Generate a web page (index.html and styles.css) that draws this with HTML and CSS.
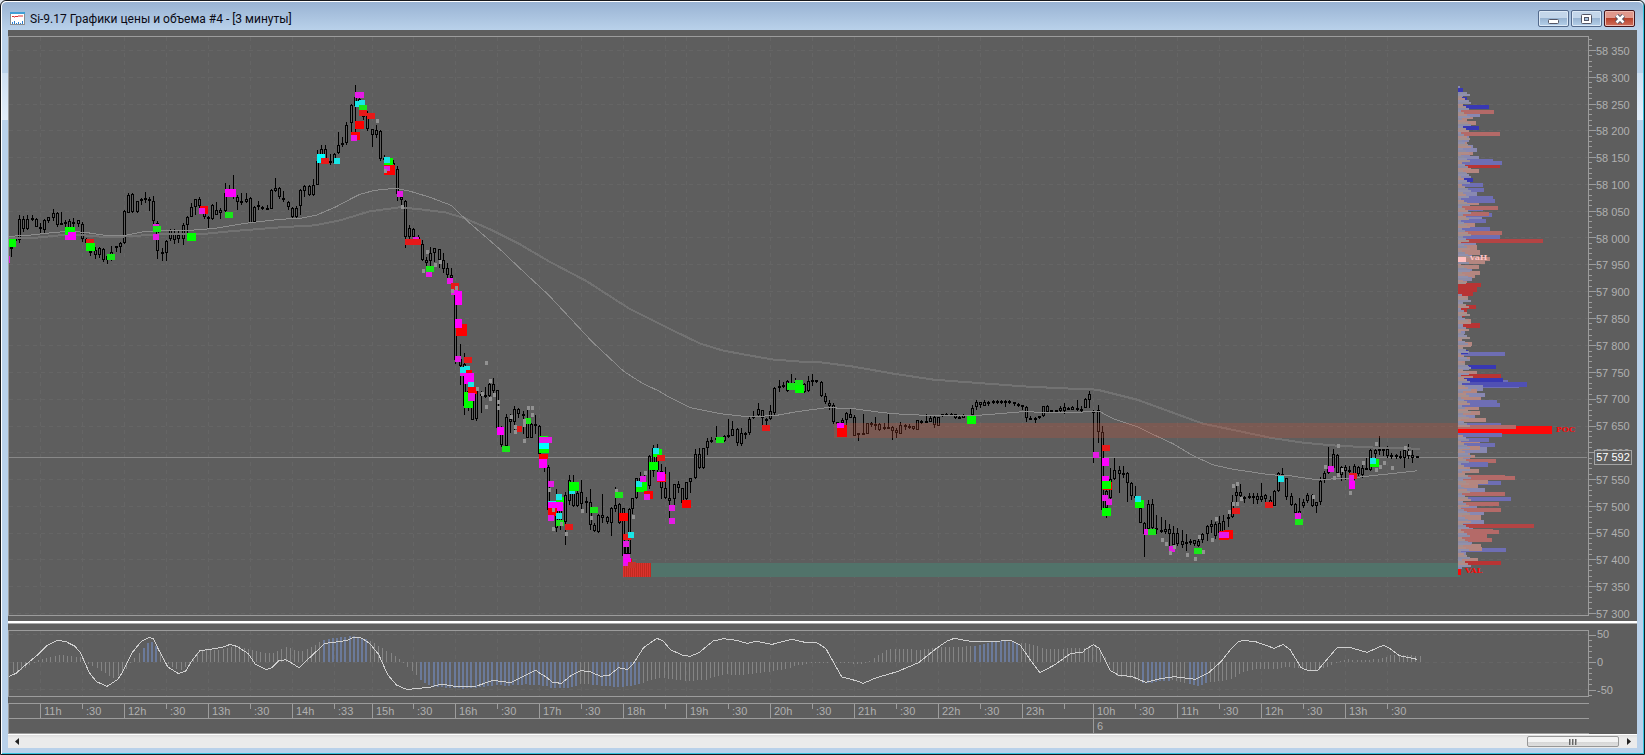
FILE: index.html
```html
<!DOCTYPE html>
<html lang="ru">
<head>
<meta charset="utf-8">
<title>Si-9.17 Графики цены и объема #4</title>
<link rel="stylesheet" href="styles.css">
</head>
<body>
<div class="window">
  <header class="titlebar">
    <svg class="app-icon" viewBox="0 0 15 13" aria-hidden="true">
      <rect x="0" y="0" width="15" height="13" fill="#8c8c8c"/>
      <rect x="1" y="1" width="13" height="11" fill="#fff"/>
      <rect x="0" y="0" width="15" height="2" fill="#3f9fd6"/>
      <path d="M2 5l1-1 1 1 1 0 1-1 1 1 1-1h5" fill="none" stroke="#d33" stroke-width="1"/>
      <path d="M2.500 12v-2M4.500 12v-3M6.500 12v-1M8.500 12v-2M10.500 12v-1M12.500 12v-3" stroke="#2b7fd0" stroke-width="1"/>
    </svg>
    <h1 class="caption">Si-9.17 Графики цены и объема #4 - [3 минуты]</h1>
    <div class="window-buttons">
      <button class="win-btn" type="button" aria-label="Свернуть"><svg viewBox="0 0 12 10"><rect x=".5" y="5.500" width="10" height="4" rx="1" fill="#fff" stroke="#535666"/></svg></button>
      <button class="win-btn" type="button" aria-label="Развернуть"><svg viewBox="0 0 12 10"><rect x=".5" y=".5" width="10" height="9" rx="1" fill="#fff" stroke="#535666"/><rect x="3.500" y="3.500" width="4" height="3" fill="#a9c4e0" stroke="#535666"/></svg></button>
      <button class="win-btn close" type="button" aria-label="Закрыть"><svg viewBox="0 0 12 10"><path d="M2.500 1.500l7 7M9.500 1.500l-7 7" stroke="#535666" stroke-width="4.500"/><path d="M2.500 1.500l7 7M9.500 1.500l-7 7" stroke="#fff" stroke-width="2.500"/></svg></button>
    </div>
  </header>
  <main class="content">
    <section class="pane price-pane">
      <svg class="plot" id="price" viewBox="9 37 1579 577" preserveAspectRatio="none"></svg>
      <svg class="ticks" id="price-ticks" viewBox="0 37 7 577" preserveAspectRatio="none"></svg>
      <div class="scale" id="price-scale"></div>
      <output class="last-price">57 592</output>
    </section>
    <div class="splitter"></div>
    <section class="pane osc-pane">
      <svg class="plot" id="osc" viewBox="9 630 1579 65" preserveAspectRatio="none"></svg>
      <svg class="ticks" id="osc-ticks" viewBox="0 630 7 65" preserveAspectRatio="none"></svg>
      <div class="scale"><span>50</span><span>0</span><span>-50</span></div>
    </section>
    <div class="time-axis">
      <div class="time-row" id="hours"></div>
      <div class="time-row" id="days"></div>
    </div>
    <div class="scrollbar">
      <button class="scroll-arrow" type="button" aria-label="Влево"><svg viewBox="0 0 4 7"><path d="M4 0v7L0 3.500z" fill="#222"/></svg></button>
      <div class="track"><div class="thumb"><i></i><i></i><i></i></div></div>
      <button class="scroll-arrow" type="button" aria-label="Вправо"><svg viewBox="0 0 4 7"><path d="M0 0v7l4-3.500z" fill="#222"/></svg></button>
    </div>
  </main>
</div>
<script src="chart.js"></script>
</body>
</html>
```
FILE: styles.css
```css
* { box-sizing: border-box; }

body {
  margin: 0;
  background: #dfe6ee;
  font-family: "Liberation Sans", Arial, sans-serif;
  font-size: 11px;
}

.window {
  height: 100vh;
  display: flex;
  flex-direction: column;
  padding: 0 7px 6px 6px;
  border: 1px solid #16181c;
  border-radius: 6px 6px 0 0;
  background: linear-gradient(#b9d1ea 72px, #cfe0f2 72px, #e2edf9 119px, #b9d1ea 119px);
  box-shadow: inset 1px 1px 0 #fff, inset -1px -1px 0 #35c3de;
}

.titlebar {
  display: flex;
  align-items: center;
  height: 29px;
  flex: none;
  margin: 0 -6px 0 -5px;
  padding: 5px 8px 0 8px;
  border-top: 1px solid #fff;
  border-radius: 5px 5px 0 0;
  background: linear-gradient(#99b3d3, #b9d1ea);
}

.app-icon { width: 15px; height: 13px; margin-right: 5px; }

.caption {
  flex: 1;
  margin: 0;
  font: 400 12px/16px Roboto, "Open Sans", sans-serif;
  color: #0a0a14;
}

.window-buttons { display: flex; gap: 2px; }

.win-btn {
  width: 31px;
  height: 17px;
  padding: 0;
  display: flex;
  align-items: center;
  justify-content: center;
  border: 1px solid #536a8c;
  border-radius: 2px;
  background: linear-gradient(#c3d6ea 50%, #98b4d2 50%, #b5d0ea);
  box-shadow: inset 0 0 0 1px #dce9f6;
}

.win-btn svg { width: 12px; height: 10px; }

.win-btn.close {
  border-color: #43141c;
  background: linear-gradient(#e0988c 50%, #b8412b 50%, #d0705c);
  box-shadow: inset 0 0 0 1px #eebcb2;
}

.content {
  flex: 1;
  min-height: 0;
  margin: 0 0 0 1px;
  display: flex;
  flex-direction: column;
  background: #5e5e5e;
}

.pane {
  display: grid;
  grid-template-columns: minmax(0, 1fr) 7px 41px;
  position: relative;
  min-height: 0;
}

.price-pane { flex: 1; overflow: hidden; grid-template-rows: minmax(0, 1fr); }
.osc-pane { flex: none; height: 79px; grid-template-rows: minmax(0, 1fr); }

.plot {
  width: 100%;
  height: calc(100% - 11px);
  margin-top: 6px;
  border: 1px solid #9c9c9c;
}

.osc-pane .plot { height: calc(100% - 12px); }

.ticks { width: 7px; height: calc(100% - 13px); margin-top: 7px; }
.osc-pane .ticks { height: calc(100% - 14px); }

.scale {
  display: flex;
  flex-direction: column;
  justify-content: space-between;
  min-height: 0;
  padding: 15px 0 1px;
  line-height: 12px;
  color: #b0b0b0;
  white-space: nowrap;
}

.osc-pane .scale { padding: 4px 0 7px 1px; }

.last-price {
  position: absolute;
  right: 5px;
  top: 71%;
  width: 38px;
  height: 15px;
  border: 1px solid #a4a4a4;
  background: #5e5e5e;
  color: #fff;
  line-height: 13px;
  text-align: center;
  white-space: nowrap;
}

.splitter { flex: none; height: 3px; background: #fff; border-bottom: 1px solid #a8a8a8; }

.time-axis {
  flex: none;
  margin-right: 48px;
  border-top: 1px solid #9c9c9c;
  border-left: 1px solid #9c9c9c;
  color: #b0b0b0;
}

.time-row { display: flex; height: 15px; border-bottom: 1px solid #9c9c9c; line-height: 14px; }

.time-cell {
  min-width: 0;
  flex-basis: 0;
  text-indent: 4px;
  white-space: nowrap;
  background: linear-gradient(#9c9c9c, #9c9c9c) 0 0 / 1px 100% no-repeat;
}
.time-cell.lead { background: none; }
.time-cell.half { background-size: 1px 5px; }

.scrollbar {
  flex: none;
  display: flex;
  height: 14px;
  border-top: 1px solid #fff;
  background: linear-gradient(#dcdcdc, #ebebeb 3px);
}

.scroll-arrow {
  width: 17px;
  padding: 0;
  border: 0;
  background: transparent;
  display: flex;
  align-items: center;
  justify-content: center;
}

.scroll-arrow svg { width: 4px; height: 7px; }

.track { flex: 1; display: flex; justify-content: flex-end; }

.thumb {
  width: 92px;
  margin: 1px 1px 1px 0;
  display: flex;
  gap: 1px;
  align-items: center;
  justify-content: center;
  border: 1px solid #979797;
  border-radius: 2px;
  background: linear-gradient(#f3f3f3 50%, #d6d6d6 50%, #dedede);
}

.thumb i { width: 2px; height: 6px; background: #666; border-right: 1px solid #aaa; }

#price, #osc, .ticks { shape-rendering: crispEdges; display: block; }

.mark-text { font: 700 8px "DejaVu Serif", "Liberation Serif", serif; }
```
FILE: chart.js
```js
const NS = 'http://www.w3.org/2000/svg';

function add(parent, tag, attrs, text) {
  const el = document.createElementNS(NS, tag);
  for (const k in attrs) el.setAttribute(k, attrs[k]);
  if (text) el.textContent = text;
  parent.appendChild(el);
}
const rect = (p, x, y, w, h, fill, extra) => add(p, 'rect', { x, y, width: w, height: h, fill, ...extra });
const line = (p, x1, y1, x2, y2, stroke, extra) => add(p, 'line', { x1, y1, x2, y2, stroke, ...extra });

/* time ticks: [x, label] */
const TIMES = [[40,'11h'],[82,':30'],[124,'12h'],[166,':30'],[208,'13h'],[250,':30'],[292,'14h'],[334,':33'],[372,'15h'],
  [413,':30'],[455,'16h'],[497,':30'],[539,'17h'],[581,':30'],[623,'18h'],[665,''],[686,'19h'],[728,':30'],[770,'20h'],
  [812,':30'],[854,'21h'],[896,':30'],[938,'22h'],[980,':30'],[1022,'23h'],[1064,''],[1093,'10h'],[1135,':30'],[1177,'11h'],
  [1219,':30'],[1261,'12h'],[1303,':30'],[1345,'13h'],[1387,':30']];

/* candles: x, high, low, body top, body bottom, in thirds of a unit from the origin */
const CANDLES = [
  { o: [0, 0], d: `34 735 770 742 745,46 710 740 716 724,58 646 728 658 720,70 648 696 658 688,82 646 690 658 688,97 646 662 654 660,109 654 682 656 680,121 668 698 680 688,133 656 698 660 690,145 650 668 652 664,160 628 662 640 654,172 636 680 640 676,184 636 674 668 672,196 660 680 666 672,208 656 690 662 690,221 654 680 666 670,235 660 680 660 672,247 666 726 672 718,259 714 730 718 728,271 728 768 752 760,286 742 776 750 764,298 742 774 744 766,310 744 786 746 780,322 766 792 768 780,334 738 782 755 780,349 738 756 738 742,361 726 758 730 742,373 630 732 632 730,385 580 638 586 638,397 580 638 582 636,412 602 638 604 636,424 594 614 598 604,436 576 610 594 600,448 590 632 596 604,460 588 674 604 664,472 664 776 668 754,487 744 782 756 760,499 720 782 722 760,511 688 724 690 716,523 686 732 700 720,535 694 728 706 716,550 670 734 674 718,562 648 720 650 676,574 608 652 622 650,586 596 646 598 622,598 592 640 598 618,613 620 656 622 652,625 648 684 650 658,637 612 660 614 656,649 606 646 630 646,661 624 656 630 640,676 550 640 580 634,688 556 585 568 580,700 526 596 580 590,712 586 630 590 606,724 580 616 604 608,739 580 608 596 606,751 592 668 594 668,763 618 668 622 666,775 604 630 616 620,787 618 630 620 626,802 614 630 624 628,814 566 628 570 626,826 534 576 564 572,838 562 598 564 592,850 574 606 594 600,865 602 630 606 622,877 622 656 624 650,889 618 654 624 650,901 568 646 570 618,913 556 592 558 574,928 556 588 558 586,940 538 588 556 586,952 450 556 484 554,964 436 470 446 468,976 436 482 446 478,991 462 494 484 488,1003 460 492 462 488,1015 396 462 434 460,1027 410 440 430 434,1039 366 434 374 430,1054 312 412 314 370,1066 255 396 290 318,1078 292 330 298 310,1090 312 360 320 350,1102 334 392 340 388,1117 386 440 388 404,1129 376 414 390 406,1141 390 482 392 476,1153 466 490 474 480,1165 480 500 484 490,1180 480 510 490 500,1192 498 602 508 582` },
  { o: [300, 60], d: `304 405 440 412 420,316 420 564 422 530,328 494 540 505 530,340 504 546 506 530,355 525 545 532 540,367 540 604 552 600,379 590 622 600 608,391 562 640 580 604,403 564 605 565 578,418 567 625 568 600,430 580 638 600 626,442 608 655 625 645,454 624 680 645 655,466 670 908 676 896,481 850 972 895 915,493 876 1062 910 1035,505 985 1050 990 1040,517 1000 1077 1020 1076,529 985 1080 990 1074,544 990 1056 1000 1004,556 978 1012 1003 1008,568 960 1012 970 1005,580 952 1002 970 990,592 987 1102 988 1100,604 1096 1158 1100 1152,619 1060 1158 1068 1155,631 1060 1116 1075 1083,643 1035 1110 1045 1082,655 1040 1072 1045 1060,670 1050 1120 1058 1066,682 1045 1130 1075 1130,694 1085 1130 1088 1130,706 1062 1120 1088 1092,718 1092 1180 1095 1178` },
  { o: [420, 340], d: `373 370 392 374 380,385 372 510 378 508,397 500 530 505 515,409 445 572 500 560,421 470 568 500 540,436 452 612 462 542,448 402 492 418 480,460 402 498 435 496,472 440 498 455 494,484 418 516 454 488,499 468 515 480 486,511 445 568 484 552,523 545 574 552 570,535 520 576 523 574,547 460 545 523 530,562 525 548 529 543,574 497 585 500 545,586 438 512 492 503,598 486 548 490 545,610 500 650 500 645,619 600 645 602 640,628 502 645 505 640,637 470 520 472 505,649 410 475 412 470,661 392 450 410 440,673 400 455 420 450,688 342 445 345 436,700 312 408 320 390,712 308 392 320 388,724 370 475 390 442,736 378 473 442 472,748 394 536 472 480,763 428 492 430 475,775 420 456 430 442,787 440 488 442 485,799 422 490 424 475,811 410 455 412 424,826 324 413 340 412,838 320 384 340 380,850 320 384 322 382` },
  { o: [640, 350], d: `202 260 312 271 292,214 258 275 268 273,229 225 265 262 266,241 258 275 262 270,253 252 272 254 270,265 205 262 252 256,277 210 256 235 254,292 230 284 234 275,304 232 284 245 278,316 243 264 245 248,328 195 252 205 245,340 180 204 196 202,355 155 198 175 192,367 176 225 178 202,379 200 222 203 207,391 163 208 181 205,403 108 196 112 185,418 88 122 105 112,430 92 110 103 109,442 88 124 90 120,454 69 100 95 100,466 82 110 92 100,493 95 125 98 122,505 74 124 90 120,517 69 104 88 91,529 88 96 88 92,544 90 138 92 136,556 126 158 136 154,568 148 178 157 164,580 156 218 162 214,592 213 225 213 216,607 200 220 206 216,619 184 222 187 208,631 174 200 190 200,643 192 256 198 254,655 246 270 247 251,670 188 250 247 250,682 216 250 217 248,694 212 228 217 223,706 198 236 219 226,718 216 240 220 236,733 216 238 228 232,745 188 235 228 231,757 224 267 229 241,769 230 260 238 245,781 213 250 223 248,796 218 236 223 227,808 220 234 224 232,820 224 238 226 235,832 206 238 208 236,844 206 218 211 214,859 188 216 210 215,871 196 214 200 213,883 196 230 198 223,895 198 226 199 224,907 190 198 190 193,919 186 196 190 193,934 185 194 188 192,946 190 204 190 200,958 192 204 198 203,970 190 202 192 201,985 192 200 194 198,997 162 194 171 192,1009 148 176 153 168,1021 152 172 154 163,1033 148 166 154 164,1045 150 164 154 160,1060 148 160 151 156,1072 148 158 151 155,1084 148 158 151 155,1096 148 168 151 156,1108 146 160 149 154,1123 152 164 153 158,1135 156 168 159 163,1147 162 178 163 167,1159 164 212 168 200,1171 196 208 200 205,1186 197 216 200 203,1198 195 204 196 200,1210 164 198 166 196,1222 162 184 164 182,1234 176 184 178 181,1249 176 184 178 181,1261 166 184 170 181,1273 156 188 167 180,1285 168 178 170 177,1297 166 178 169 176,1312 147 180 170 176,1324 166 184 173 178,1336 142 172 145 170,1348 120 172 130 146,1360 176 336 179 182,1375 162 276 178 242` },
  { o: [1070, 370], d: `97 165 420 184 418,109 355 440 360 410,121 292 390 325 380,133 262 328 297 325,148 285 366 297 308,160 285 322 305 310,172 302 392 306 336,184 332 386 336 374,196 345 390 374 380,211 400 455 410 455,223 452 558 455 488,235 388 480 398 475,247 384 480 400 472,259 432 490 470 474,274 438 486 477 483,286 446 488 475 482,298 460 528 475 488,310 465 535 487 522,322 472 525 487 520,337 476 530 510 522,349 488 540 512 518,361 503 522 511 517,373 507 525 508 520,385 505 528 510 524,397 486 516 488 506,412 462 510 466 488,424 448 486 460 467,436 454 505 460 495,448 436 485 455 485,460 432 490 450 490,475 430 468 438 441,487 372 442 392 438,499 345 400 364 376,511 339 384 364 376,523 374 396 378 381,538 366 385 376 380,550 366 398 375 380,562 366 400 376 388,574 336 392 374 388,586 368 393 373 385,600 376 404 388 400,613 356 404 361 404,625 304 362 306 360,637 290 320 308 315,649 320 386 322 378,664 366 404 374 402,676 396 430 398 425,688 380 440 420 430,700 385 410 392 405,712 366 396 371 391,727 368 408 371 404,739 392 426 394 404,751 318 402 330 392,763 300 335 305 325,775 228 308 295 305,790 235 300 250 290,802 248 312 253 305,814 284 330 287 312,826 282 326 287 300,838 284 310 296 302,853 278 328 284 310,865 286 315 288 308,877 282 320 292 312,889 262 298 292 296,901 235 300 238 298,916 233 265 236 250,928 196 252 234 237,940 234 254 235 238,952 226 262 235 256,964 246 264 251 255,979 250 265 252 256,991 240 264 254 262,1003 226 290 238 262,1015 220 264 240 255,1027 238 276 252 260,1042 255 262 256 260` }
];

/* volume markers: colour, x, y, width, height; grey ones share one size */
const INK = { g: '#00ff00', G: '#19e619', m: '#ff00ff', M: '#e619e6', c: '#00ffff', C: '#19e6e6', r: '#ff0000', R: '#e61919', y: '#929292' };
const MARKERS = [
  { o: [0, 0], d: `g 27 717 21 24,M 27 768 3 20,g 195 681 30 27,M 196 706 16 14,m 205 697 23 23,R 257 717 24 14,g 258 729 27 24,G 321 762 24 18,M 460 672 18 8,G 459 678 24 18,M 459 702 18 18,g 561 699 27 25,r 599 617 25 24,M 597 624 18 18,m 675 567 33 24,G 675 636 24 18,c 951 462 25 27,R 963 474 24 18,C 1002 474 18 18,M 1066 276 26 18,C 1066 303 16 18,C 1077 300 18 18,G 1077 315 24 16,R 1077 330 24 18,R 1101 340 24 19,r 1066 363 26 24,r 1054 396 26 24,M 1054 405 18 18,y 1128 357,g 1153 474 26 26,C 1152 471 18 18,r 1152 496 33 29,M 1152 498 18 14,y 1152 507,M 1191 573 18 18,y 1203 615,M 1239 712 18 8,R 1215 717 24 18,R 1239 717 24 18` },
  { o: [300, 60], d: `y 378 570,M 378 636 18 15,G 378 618 24 18,y 366 627,y 402 609,y 417 600,M 441 654 18 18,R 453 669 24 20,M 454 690 20 15,m 465 693 21 42,y 453 687,y 465 678,r 467 792 34 33,m 465 777 20 24,M 465 885 18 18,R 492 888 24 18,M 480 930 18 15,C 480 918 18 18,C 492 915 18 18,r 498 928 18 15,m 492 936 30 33,C 504 963 18 15,g 492 993 27 48,r 504 978 26 22,y 528 978,M 504 996 20 23,y 555 900,y 567 954,y 543 993,y 579 996,y 567 1008,y 555 1032,y 591 1018,y 591 1035,m 591 1098 20 24,G 606 1155 24 18,y 630 1062,R 651 1095 14 18,y 642 1092,y 642 1107,G 675 1071 18 18,y 669 1074,y 669 1086,y 681 1035,y 693 1035,y 693 1056,y 669 1134` },
  { o: [420, 340], d: `g 357 285 28 8,M 357 288 38 17,c 357 306 30 18,g 357 324 30 12,r 357 339 27 16,m 357 354 25 27,M 384 420 18 18,y 384 441,C 384 480 24 8,g 409 468 23 18,m 384 483 45 20,C 408 459 18 18,m 406 485 24 24,r 384 500 27 24,y 396 501,M 384 522 18 18,C 408 516 18 18,G 408 537 24 18,y 420 543,y 396 558,y 435 573,R 435 549 24 18,C 447 440 18 19,g 447 423 30 27,y 483 504,G 510 498 24 18,y 510 525,y 585 444,G 585 453 24 18,r 597 516 26 24,R 609 579 24 18,C 624 573 18 18,M 609 600 18 18,M 609 640 21 37,r 628 655 10 20,m 612 650 20 14,y 636 522,g 648 423 33 30,C 648 420 18 18,M 660 405 18 18,y 672 390,r 673 450 26 24,M 672 459 18 18,g 700 324 26 24,C 699 321 18 18,R 711 342 24 18,g 687 363 27 24,r 711 400 27 25,m 712 393 24 27,M 747 492 18 18,M 747 531 18 18,r 786 477 27 24` },
  { o: [640, 350], d: `G 228 258 24 18,R 366 222 24 18,G 441 96 24 21,G 465 87 24 18,g 465 102 27 24,r 591 222 30 36,m 591 216 21 16,g 981 195 27 24` },
  { o: [1070, 370], d: `M 69 243 18 18,R 96 222 24 18,m 96 262 22 24,m 96 315 21 20,r 100 334 26 24,g 96 330 27 24,M 96 372 18 18,M 108 384 18 18,g 96 411 27 24,g 195 387 27 24,C 195 375 18 18,M 221 474 18 18,G 234 474 24 18,y 273 501,y 285 513,M 297 525 18 18,y 297 540,y 309 522,y 348 546,G 372 531 24 18,y 372 558,y 396 537,y 384 492,y 423 500,y 435 438,r 447 480 30 27,r 462 477 27 26,M 448 483 29 18,R 486 411 24 18,y 474 417,y 486 339,y 498 333,y 510 378,y 498 393,y 486 393,R 585 393 24 18,C 624 315 18 18,M 675 426 18 18,G 675 444 24 18,y 726 372,M 774 285 18 18,y 762 282,y 801 219,y 801 306,y 789 315,y 813 291,y 837 360,R 837 306 24 18,M 838 312 16 20,m 838 330 19 23,y 876 270,g 900 264 27 24,C 900 262 18 18,y 915 213,y 915 291,y 927 282,y 939 270,y 963 285,y 1002 225,y 1014 240` }
];

const FAST = '9,236 28,235 55,232 70,231 85,232 105,235 125,235 145,231 190,230 215,228 245,223 280,219 300,218 316,215 335,207 350,199 360,194 375,190 395,188 410,191 430,197 451,205 470,223 500,249 520,268 549,295 592,341 624,371 643,383 658,390 670,397 690,407 720,413 747,416 775,415 797,411 827,407 853,408 883,412 907,414 940,415 973,415 1000,413 1023,411 1053,412 1100,411 1113,418 1137,426 1160,437 1173,443 1193,455 1213,464 1230,468 1270,474 1290,475 1317,479 1353,477 1390,473 1417,470';
const SLOW = '9,238 30,238 70,234 110,237 160,234 200,234 230,231 280,227 315,225 340,220 370,211 400,207 420,209 445,212 465,218 490,229 520,244 549,261 587,281 629,308 671,329 700,343 723,350 750,355 773,359 800,361 823,362 853,366 893,373 933,379 973,382 1027,386 1070,388 1097,389 1137,399 1170,411 1203,423 1237,430 1270,437 1303,442 1337,445 1377,447 1420,448';

/* volume profile rows: top, bottom, right edge, colour (thirds of a unit) */
const TONE = { B: '#3838b4', b: '#6e6eb4', v: '#5050b4', p: '#8888b2', r: '#b46a68', s: '#b48680', R: '#b83434', D: '#b44444', F: '#ff0808' };
const PROFILE = [
  { y: 60, d: `78 90 119 p,84 99 129 B,99 110 129 p,111 123 141 B,120 132 147 p,135 147 207 B,161 171 180 p,150 162 222 r,171 177 160 s,177 183 140 s,183 195 168 s,195 204 138 s,198 210 177 B,210 216 140 p,216 228 240 r,228 245 147 p,245 256 140 s,255 264 158 p,264 275 171 p,275 285 158 s,285 290 150 p,288 299 177 p,297 304 219 b,303 315 246 b,315 324 240 R,324 328 150 p,327 339 177 s,339 350 140 p,347 356 153 p,354 366 159 B,366 370 140 s,369 381 189 b,384 396 192 b,396 408 170 p,407 420 219 b,417 429 225 b,429 436 177 s,438 450 234 r,450 453 190 b,459 471 216 b,456 468 208 r,471 478 185 p,477 489 198 b,489 501 165 s,501 513 210 b,525 540 240 b,513 525 246 r,538 550 370 D,550 556 168 p,556 570 170 s,570 585 180 s,585 591 155 p,591 603 210 s,603 612 195 s,615 627 177 s,627 634 155 p,633 645 180 s,645 654 165 s,652 664 157 p,664 670 140 s,669 681 184 R,681 696 172 R,696 708 160 R,708 720 144 s,720 735 130 s,735 748 168 R,748 760 140 R,760 772 135 R,772 783 126 B,778 789 153 s,789 801 180 R` },
  { y: 320, d: `0 10 153 s,21 30 130 s,28 40 135 p,35 56 125 R,63 75 156 s,75 86 130 s,94 105 255 b,87 99 144 B,108 120 150 s,120 132 135 s,132 144 228 B,135 148 146 p,150 160 171 s,160 171 243 R,165 177 160 s,177 186 263 b,172 183 250 B,196 201 297 b,183 197 321 v,193 209 189 p,204 216 172 s,216 228 195 p,228 240 182 s,246 258 240 b,238 251 230 b,258 268 177 s,270 282 180 s,282 291 165 p,291 303 198 s,306 318 243 b,315 339 397 F,312 323 288 r,336 348 246 b,351 363 207 b,363 374 180 s,366 378 225 b,378 396 200 p,374 388 180 s,396 404 150 s,402 412 165 s,412 414 150 p,414 426 228 r,424 438 204 b,438 444 150 s,444 456 177 s,462 466 256 r,465 477 286 r,480 492 243 b,477 489 204 s,490 504 175 s,500 512 195 p,513 525 255 r,528 540 273 b,543 555 238 r,555 562 170 p,570 582 192 p,561 573 243 r,582 597 183 s,597 610 192 p,609 621 342 D,621 627 160 p,624 630 218 r,627 639 238 r,639 651 202 r,651 663 216 r,663 669 155 p,669 681 183 s,681 693 258 b,678 690 186 s,693 711 138 p,711 720 174 s,720 732 243 R,732 738 145 s,738 745 127 p,745 762 124 F` }
];

/* oscillator: x origin, then x/y pairs in the oscillator's own steps */
const OSC_X = 2.8;
const ENVELOPE = [
  [0, '36 185 60 178 82 163 100 150 130 142 170 132 225 138 240 150 245 156 285 180 320 202 345 185 365 157 390 125 415 92 430 93 445 125 465 150 480 168 505 178 525 165 545 140 560 118 620 117 660 102 700 115 740 127 765 125 800 108 845 122 880 104 910 84 990 75 1025 83 1060 104 1100 130 1125 150 1150 175 1185 215 1210 228 1300 233 1400 222 1420 225 1470 220 1510 222 1540 228'],
  [540, '30 230 75 231 120 218 170 224 215 228 260 224 290 214 340 200 410 210 460 207 520 190 570 192 630 184 680 176 720 164 755 158 770 154 820 151 850 155 870 158 900 158 920 153 940 137 975 115 1040 115 1060 117 1130 108 1210 106 1240 98 1290 90 1340 95 1370 98 1415 114 1460 114 1490 110 1525 110'],
  [1085, '10 110 30 106 50 120 60 150 75 175 90 195 130 200 165 218 200 212 250 208 290 218 320 225 340 215 380 210 410 205 440 183 470 175 530 175 570 168 595 172 630 180 660 175 690 162 705 153 740 145 790 148 830 141 860 132 890 131 940 135']
];
const CURVE = [
  [0, '25 196 45 187 70 163 105 132 130 105 160 88 185 92 210 106 225 125 250 185 270 212 300 226 330 205 345 180 370 125 395 92 418 79 430 84 445 118 470 168 500 188 520 180 540 145 560 119 600 113 625 108 645 100 665 107 695 128 715 160 745 176 760 171 780 150 800 146 815 155 838 171 860 147 910 97 950 92 975 87 990 79 1010 80 1035 97 1060 130 1085 190 1110 222 1140 236 1165 232 1200 230 1235 219 1280 227 1335 225 1380 208 1430 215 1470 194 1500 178'],
  [540, '0 187 20 200 35 214 60 217 85 195 115 179 140 182 170 196 195 192 220 170 245 176 260 160 290 110 310 95 327 82 345 90 365 116 400 133 420 136 445 125 485 90 515 83 550 88 580 97 605 91 650 100 705 85 750 96 775 95 800 112 820 150 845 198 885 209 905 217 940 201 1000 182 1060 155 1110 112 1140 90 1160 82 1200 90 1260 91 1320 89 1345 103 1375 150 1400 185 1440 162 1485 128 1520 123'],
  [1085, '0 116 23 101 40 112 70 178 95 193 130 196 170 214 210 203 250 197 310 205 345 186 380 153 410 112 430 92 445 88 480 93 530 112 555 100 575 117 605 170 625 179 650 180 670 155 705 111 740 109 790 124 835 103 850 110 880 134 930 145']
];
const STRONG = [[142,156],[323,369],[418,579],[590,639],[973,1020],[1140,1168],[1186,1209]];

const GRID = '#656565';
const EDGE = '#9c9c9c';
const yOf = price => 50.5 + (58350 - price) * 562 / 1050;

function drawPrice() {
  const p = document.getElementById('price');
  for (let v = 58350; v >= 57300; v -= 50) {
    const y = Math.floor(yOf(v)) + .5;
    line(p, 9, y, 1588, y, GRID, { 'stroke-dasharray': '4 4' });
  }
  TIMES.forEach(([x]) => line(p, x + .5, 37, x + .5, 614, GRID, { 'stroke-dasharray': '4 4' }));
  rect(p, 9, 456, 1578, 1, '#888');

  CANDLES.forEach(({ o, d }) => d.split(',').forEach(row => {
    const [x, hi, lo, top, bot] = row.split(' ').map(Number);
    const cx = o[0] + Math.floor(x / 3);
    const y = v => o[1] + Math.round(v / 3);
    rect(p, cx, y(hi), 1, Math.max(1, y(lo) - y(hi)), '#000');
    const h = Math.max(2, y(bot) - y(top));
    rect(p, cx - 1, y(top), 3, h, '#000');
    if (h > 2) rect(p, cx, y(top) + 1, 1, h - 2, '#5e5e5e');
  }));

  add(p, 'polyline', { points: SLOW, fill: 'none', stroke: '#727272', 'stroke-width': 2 });
  add(p, 'polyline', { points: FAST, fill: 'none', stroke: '#8c8c8c', 'stroke-width': 1 });
  rect(p, 834, 422, 624, 15, 'rgba(200,83,57,.27)');
  rect(p, 651, 562, 809, 14, '#51736a');

  rect(p, 623, 562, 28, 14, '#dc322d');
  for (let x = 624; x < 651; x += 2) rect(p, x, 562, 1, 14, '#c02a20');
  MARKERS.forEach(({ o, d }) => d.split(',').forEach(row => {
    const [c, x, y, w = 9, h = 12] = row.split(' ');
    const x0 = o[0] + Math.round(x / 3), y0 = o[1] + Math.round(y / 3);
    rect(p, x0, y0, Math.round(w / 3), Math.round(h / 3), INK[c]);
  }));
  rect(p, 628, 561, 8, 6, '#c8322c');

  PROFILE.forEach(({ y, d }) => d.split(',').forEach(row => {
    const [a, b, e, c] = row.split(' ');
    const top = y + Math.round(a / 3);
    rect(p, 1458, top, Math.round((e - 114) / 3), y + Math.round(b / 3) - top, TONE[c]);
  }));
  /* short rows at the base of the profile */
  for (let y = 92; y < 566; y += 2) {
    if (y > 282 && y < 294 || y > 424 && y < 433) continue;
    const w = 3 + (y * 7 % 11);
    rect(p, 1458, y, w, 2, ['#a3908f', '#9090ac', '#b08c88', '#8d8da6'][(y * 5 >> 2) % 4]);
  }
  rect(p, 1458, 257, 8, 5, '#ffbfbf');
  const label = (x, y, fill, t) => add(p, 'text', { x, y, fill, class: 'mark-text' }, t);
  label(1470, 260, '#ffc4c4', 'vaH');
  label(1556, 431, '#ff0808', 'POC');
  label(1465, 572, '#ff0808', 'VAL');
}

function drawTicks() {
  const p = document.getElementById('price-ticks');
  for (let v = 58370; v >= 57300; v -= 10) rect(p, 0, Math.floor(yOf(v)), v % 50 ? 3 : 7, 1, EDGE);
  const s = document.getElementById('osc-ticks');
  for (let v = 50; v >= -60; v -= 10) rect(s, 0, Math.round(661 - v * .55), v % 50 ? 3 : 7, 1, EDGE);
  const scale = document.getElementById('price-scale');
  for (let v = 58350; v >= 57300; v -= 50) {
    const el = document.createElement('span');
    el.textContent = String(v).slice(0, 2) + ' ' + String(v).slice(2);
    scale.appendChild(el);
  }
}

function points(groups) {
  return groups.flatMap(([x0, s]) => {
    const n = s.split(' ').map(Number), out = [];
    for (let i = 0; i < n.length; i += 2) out.push([x0 + n[i] / OSC_X, 610 + n[i + 1] / 3]);
    return out;
  });
}

function drawOsc() {
  const p = document.getElementById('osc');
  [633, 661, 688].forEach(y => line(p, 9, y + .5, 1588, y + .5, GRID, { 'stroke-dasharray': '4 4' }));
  TIMES.forEach(([x]) => line(p, x + .5, 630, x + .5, 695, GRID, { 'stroke-dasharray': '4 4' }));
  const env = points(ENVELOPE);
  for (let i = 0, k = 0; i < 336; i++) {
    const x = 13 + i * 4.2;
    while (k < env.length - 2 && env[k + 1][0] < x) k++;
    const [a, b] = [env[k], env[k + 1]];
    const t = Math.max(0, Math.min(1, (x - a[0]) / (b[0] - a[0])));
    const end = Math.round(a[1] + (b[1] - a[1]) * t);
    const strong = STRONG.some(([l, r]) => x >= l && x <= r);
    rect(p, Math.floor(x), Math.min(661, end), strong ? 2 : 1, Math.max(1, Math.abs(end - 661)), strong ? '#6b7a9a' : '#858585');
  }
  add(p, 'polyline', { points: points(CURVE).map(q => q.join()).join(' '), fill: 'none', stroke: '#cfcfcf', 'stroke-width': 1 });
}

function drawTimeRow(id, ticks) {
  const row = document.getElementById(id);
  const cell = (w, cls, text) => {
    const el = document.createElement('span');
    el.className = 'time-cell ' + cls;
    el.style.flexGrow = w;
    el.textContent = text;
    row.appendChild(el);
  };
  cell(ticks[0][0] - 9, 'lead', '');
  ticks.forEach(([x, t], i) => cell((ticks[i + 1] || [1589])[0] - x, /h$|^6$/.test(t) ? '' : 'half', t));
}

drawPrice();
drawTicks();
drawOsc();
drawTimeRow('hours', TIMES);
drawTimeRow('days', [[1093, '6']]);
```
